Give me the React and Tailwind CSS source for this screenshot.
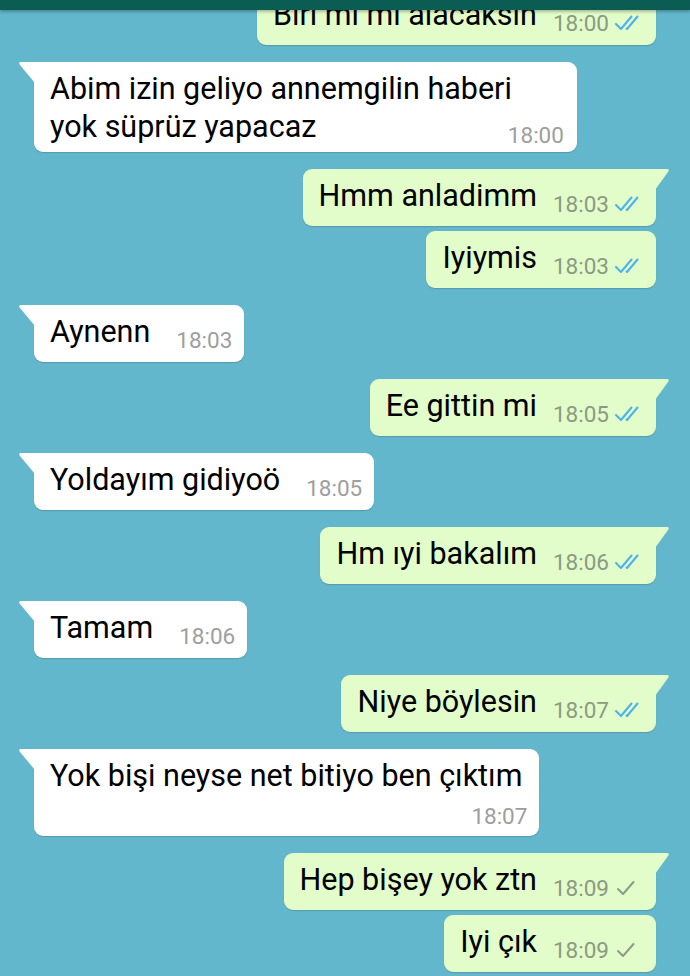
const messages = [
  { out: true, text: "Biri mi mi alacaksın", time: "18:00", tick: "read", tail: false },
  { out: false, lines: ["Abim izin geliyo annemgilin haberi", "yok süprüz yapacaz"], time: "18:00", tail: true },
  { out: true, text: "Hmm anladimm", time: "18:03", tick: "read", tail: true },
  { out: true, text: "Iyiymis", time: "18:03", tick: "read", tail: false },
  { out: false, text: "Aynenn", time: "18:03", tail: true },
  { out: true, text: "Ee gittin mi", time: "18:05", tick: "read", tail: true },
  { out: false, text: "Yoldayım gidiyoö", time: "18:05", tail: true },
  { out: true, text: "Hm ıyi bakalım", time: "18:06", tick: "read", tail: true },
  { out: false, text: "Tamam", time: "18:06", tail: true },
  { out: true, text: "Niye böylesin", time: "18:07", tick: "read", tail: true },
  { out: false, text: "Yok bişi neyse net bitiyo ben çıktım", time: "18:07", tail: true, stacked: true },
  { out: true, text: "Hep bişey yok ztn", time: "18:09", tick: "sent", tail: true },
  { out: true, text: "Iyi çık", time: "18:09", tick: "sent", tail: false },
];

function Ticks({ kind }) {
  if (kind === "sent") {
    return (
      <svg width="31" height="20" viewBox="0 0 31 20" className="ml-[4px] mb-[1px]">
        <path d="M5 11 L10 16 L20.5 4" fill="none" stroke="#8d9c88" strokeWidth="2" strokeLinecap="round" strokeLinejoin="round" />
      </svg>
    );
  }
  return (
    <svg width="31" height="20" viewBox="0 0 31 20" className="ml-[4px] mb-[1px]">
      <path d="M3 11 L8 16 L18.5 3.5" fill="none" stroke="#4db3ea" strokeWidth="2.1" strokeLinecap="round" strokeLinejoin="round" />
      <path d="M13.5 15.5 L14 16 L24.5 3.5" fill="none" stroke="#4db3ea" strokeWidth="2.1" strokeLinecap="round" strokeLinejoin="round" />
    </svg>
  );
}

function Time({ m }) {
  return (
    <div className="flex items-end shrink-0">
      <span className={`text-[22.5px] leading-[22.5px] ${m.out ? "text-[#8a9a84]" : "text-[#9e9e9e]"}`}>{m.time}</span>
      {m.out && <Ticks kind={m.tick} />}
    </div>
  );
}

function Bubble({ m }) {
  const bg = m.out ? "bg-[#e2fdc9]" : "bg-white";
  const corners = m.tail ? (m.out ? "rounded-[9px] rounded-tr-none" : "rounded-[9px] rounded-tl-none") : "rounded-[9px]";

  return (
    <div className={`relative ${bg} ${corners} shadow-[0_1px_1px_rgba(0,0,0,0.16)] text-black`}>
      {m.tail && m.out && (
        <svg width="15" height="21" viewBox="0 0 15 21" className="absolute top-0 right-[-14px]">
          <path d="M0 0 H12 Q15 0 13 3 L0 21 Z" fill="#e2fdc9" />
        </svg>
      )}
      {m.tail && !m.out && (
        <svg width="17" height="21" viewBox="0 0 17 21" className="absolute top-0 left-[-16px]">
          <path d="M17 0 H3 Q0 0 2 3 L17 21 Z" fill="#ffffff" />
        </svg>
      )}

      {m.lines ? (
        <div className="flex items-end pl-4 pr-[13px] pt-[8px] pb-[6px]">
          <div className="text-[30.5px] leading-[38px] whitespace-nowrap">
            {m.lines[0]}
            <br />
            {m.lines[1]}
          </div>
          <div className="ml-[-4px]">
            <Time m={m} />
          </div>
        </div>
      ) : m.stacked ? (
        <div className="flex flex-col pl-4 pr-[12px] pt-[8px] pb-[8.5px]">
          <div className="text-[30.5px] leading-[38px] whitespace-nowrap pr-[5px]">{m.text}</div>
          <div className="self-end mt-[10px]">
            <Time m={m} />
          </div>
        </div>
      ) : (
        <div className={`flex items-end pl-4 ${m.out ? "pr-[12px] gap-4" : "pr-[12px] gap-[26px]"} pt-[8px] pb-[11px]`}>
          <div className="text-[30.5px] leading-[38px] whitespace-nowrap">{m.text}</div>
          <Time m={m} />
        </div>
      )}
    </div>
  );
}

export default function App() {
  return (
    <div className="relative w-[690px] h-[976px] overflow-hidden bg-[#63b7cc] font-['Roboto',sans-serif]">
      {/* toolbar edge */}
      <div className="absolute top-0 inset-x-0 h-[10px] bg-[#0b5d54] shadow-[0_2px_3px_rgba(0,0,0,0.25)] z-10" />

      <div className="flex flex-col mt-[-12px]">
        {messages.map((m, i) => {
          const prev = messages[i - 1];
          const gap = i === 0 ? "" : prev.out === m.out ? "mt-[5px]" : "mt-[17px]";
          return (
            <div key={i} className={`flex ${gap} ${m.out ? "justify-end pr-[34px]" : "justify-start pl-[34px]"}`}>
              <Bubble m={m} />
            </div>
          );
        })}
      </div>
    </div>
  );
}
